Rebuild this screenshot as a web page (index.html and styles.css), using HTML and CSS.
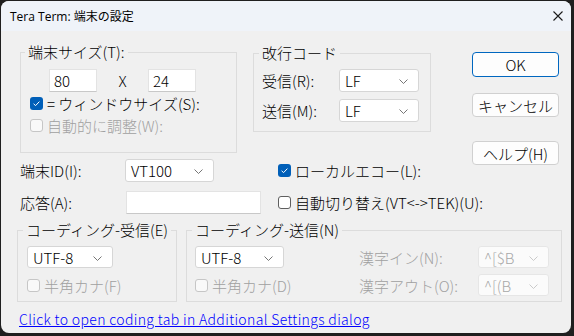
FILE: index.html
```html
<!DOCTYPE html>
<html lang="ja">
<head>
    <meta charset="UTF-8">
    <meta name="viewport" content="width=device-width, initial-scale=1.0">
    <title>Tera Term: 端末の設定</title>

    <link rel="stylesheet" href="styles.css">
</head>
<body>
    <div class="window">
        <div class="titlebar">
            <span class="title">Tera Term: 端末の設定</span>
            <svg class="close" width="10" height="10" viewBox="0 0 10 10">
                <path d="M0.5 0.5 L9.5 9.5 M9.5 0.5 L0.5 9.5" stroke="#1a1a1a" stroke-width="1.1" fill="none"/>
            </svg>
        </div>

        <div class="content">
            <div class="top">
                <div class="main">
                    <div class="groups">
                        <fieldset class="group size-group">
                            <legend>端末サイズ(T):</legend>
                            <div class="size-row">
                                <span class="field size-field">80</span>
                                <span class="times">X</span>
                                <span class="field size-field">24</span>
                            </div>
                            <div class="check-row size-check">
                                <span class="chk on"><svg width="13" height="13" viewBox="0 0 13 13"><path d="M3.6 6.8 L5.6 8.6 L9.4 4.6" stroke="#fff" stroke-width="1" fill="none"/></svg></span>
                                <span>= ウィンドウサイズ(S):</span>
                            </div>
                            <div class="check-row size-check disabled">
                                <span class="chk"></span>
                                <span>自動的に調整(W):</span>
                            </div>
                        </fieldset>

                        <fieldset class="group eol-group">
                            <legend>改行コード</legend>
                            <div class="eol-row">
                                <span class="eol-label">受信(R):</span>
                                <span class="select eol-select">LF<svg class="chev" width="9" height="5" viewBox="0 0 9 5"><path d="M0.5 0.5 L4.5 4.5 L8.5 0.5" stroke="#666" stroke-width="0.9" fill="none"/></svg></span>
                            </div>
                            <div class="eol-row">
                                <span class="eol-label">送信(M):</span>
                                <span class="select eol-select">LF<svg class="chev" width="9" height="5" viewBox="0 0 9 5"><path d="M0.5 0.5 L4.5 4.5 L8.5 0.5" stroke="#666" stroke-width="0.9" fill="none"/></svg></span>
                            </div>
                        </fieldset>
                    </div>

                    <div class="id-grid">
                        <span>端末ID(I):</span>
                        <span class="select id-select">VT100<svg class="chev" width="9" height="5" viewBox="0 0 9 5"><path d="M0.5 0.5 L4.5 4.5 L8.5 0.5" stroke="#666" stroke-width="0.9" fill="none"/></svg></span>
                        <div class="check-row">
                            <span class="chk on"><svg width="13" height="13" viewBox="0 0 13 13"><path d="M3.6 6.8 L5.6 8.6 L9.4 4.6" stroke="#fff" stroke-width="1" fill="none"/></svg></span>
                            <span>ローカルエコー(L):</span>
                        </div>

                        <span>応答(A):</span>
                        <span class="field answer-field"></span>
                        <div class="check-row">
                            <span class="chk"></span>
                            <span>自動切り替え(VT&lt;-&gt;TEK)(U):</span>
                        </div>
                    </div>
                </div>

                <div class="buttons">
                    <button class="btn default">OK</button>
                    <button class="btn cancel">キャンセル</button>
                    <button class="btn help">ヘルプ(H)</button>
                </div>
            </div>

            <div class="coding">
                <fieldset class="group recv-group">
                    <legend>コーディング-受信(E)</legend>
                    <div class="code-grid">
                        <span class="select code-select">UTF-8<svg class="chev" width="9" height="5" viewBox="0 0 9 5"><path d="M0.5 0.5 L4.5 4.5 L8.5 0.5" stroke="#666" stroke-width="0.9" fill="none"/></svg></span>
                        <div class="check-row disabled">
                            <span class="chk"></span>
                            <span>半角カナ(F)</span>
                        </div>
                    </div>
                </fieldset>

                <fieldset class="group send-group">
                    <legend>コーディング-送信(N)</legend>
                    <div class="code-grid send-grid">
                        <span class="select code-select">UTF-8<svg class="chev" width="9" height="5" viewBox="0 0 9 5"><path d="M0.5 0.5 L4.5 4.5 L8.5 0.5" stroke="#666" stroke-width="0.9" fill="none"/></svg></span>
                        <span class="dim">漢字イン(N):</span>
                        <span class="select kanji-select off">^[$B<svg class="chev" width="9" height="5" viewBox="0 0 9 5"><path d="M0.5 0.5 L4.5 4.5 L8.5 0.5" stroke="#c4c4c4" stroke-width="0.9" fill="none"/></svg></span>

                        <div class="check-row disabled">
                            <span class="chk"></span>
                            <span>半角カナ(D)</span>
                        </div>
                        <span class="dim">漢字アウト(O):</span>
                        <span class="select kanji-select off">^[(B<svg class="chev" width="9" height="5" viewBox="0 0 9 5"><path d="M0.5 0.5 L4.5 4.5 L8.5 0.5" stroke="#c4c4c4" stroke-width="0.9" fill="none"/></svg></span>
                    </div>
                </fieldset>
            </div>

            <a class="link" href="#">Click to open coding tab in Additional Settings dialog</a>
        </div>
    </div>
</body>
</html>
```

FILE: styles.css
```css
*{
    box-sizing: border-box;
}

body{
    margin: 0;
    background: #1f1f1f;
    font-family: "Noto Sans CJK JP", sans-serif;
    font-size: 15px;
    font-weight: 300;
    color: #000;
}

.window{
    width: 570px;
    height: 332px;
    margin: 1px 0 0 1px;
    background: #f0f0f0;
    border-radius: 8px;
    overflow: hidden;
}

.titlebar{
    height: 30px;
    background: #eff3f9;
    display: flex;
    align-items: center;
    justify-content: space-between;
    padding: 0 8px 0 9px;
}

.title{
    font-family: "Open Sans", "Noto Sans CJK JP", sans-serif;
    font-size: 12px;
    font-weight: 400;
}

.content{
    padding-left: 16px;
}

.top{
    display: flex;
}

.main{
    width: 455px;
}

.groups{
    display: flex;
    align-items: flex-start;
}

.group{
    margin: 0;
    padding: 0;
    border: 1px solid #dcdcdc;
    min-width: 0;
}

.group legend{
    padding: 0 3px;
    line-height: 18px;
}

.size-group{
    margin: 12px 0 0 3px;
    width: 217px;
    height: 110px;
}

.size-group legend{
    margin-left: 4px;
}

.size-row{
    display: flex;
    align-items: center;
    margin: 8px 0 0 28px;
}

.field{
    display: inline-flex;
    align-items: center;
    height: 23px;
    padding-left: 4px;
    background: #fff;
    border: 1px solid #e3e3e3;
    border-bottom-color: #c8c8c8;
    line-height: 1;
}

.size-field{
    width: 48px;
}

.times{
    width: 51px;
    text-align: center;
}

.check-row{
    display: flex;
    align-items: center;
    gap: 4px;
    height: 22px;
    white-space: nowrap;
}

.size-check{
    margin-left: 9px;
}

.size-check:first-of-type{
    margin-top: 5px;
}

.chk{
    width: 13px;
    height: 13px;
    flex: none;
    border: 1px solid #5f5f5f;
    border-radius: 3px;
    background: #fff;
}

.chk.on{
    border: none;
    background: #005fb8;
}

.chk svg{
    display: block;
}

.disabled{
    color: #a0a0a0;
}

.disabled .chk{
    border-color: #c6c6c6;
    background: #f9f9f9;
}

.dim{
    color: #a0a0a0;
}

.eol-group{
    margin: 13px 0 0 16px;
    width: 178px;
    height: 88px;
}

.eol-group legend{
    margin-left: 5px;
}

.eol-row{
    display: flex;
    align-items: center;
    margin: 7px 0 0 8px;
}

.eol-label{
    width: 77px;
}

.select{
    position: relative;
    display: inline-flex;
    align-items: center;
    height: 23px;
    padding-left: 5px;
    background: #fff;
    border: 1px solid #d6d6d6;
    border-radius: 3px;
    line-height: 1;
}

.chev{
    position: absolute;
    right: 10px;
    top: 9px;
}

.select.off{
    background: #fbfbfb;
    border-color: #e6e6e6;
    color: #a8a8a8;
}

.eol-select{
    width: 80px;
}

.id-grid{
    display: grid;
    grid-template-columns: 105px 153px auto;
    grid-auto-rows: 23px;
    row-gap: 9px;
    align-items: center;
    margin: 6px 0 0 3px;
}

.id-select{
    width: 89px;
}

.answer-field{
    width: 135px;
    margin-left: 1px;
}

.buttons{
    display: flex;
    flex-direction: column;
    margin-top: 21px;
}

.btn{
    width: 87px;
    height: 24px;
    padding: 0;
    background: #fdfdfd;
    border: 1px solid #d0d0d0;
    border-radius: 4px;
    font-family: "Noto Sans CJK JP", sans-serif;
    font-size: 15px;
    font-weight: 300;
    line-height: 1;
    color: #000;
}

.btn.default{
    height: 25px;
    border-color: #0067c0;
}

.btn.cancel{
    margin-top: 16px;
}

.btn.help{
    margin-top: 24px;
}

.coding{
    display: flex;
    margin-top: 7px;
}

.recv-group{
    width: 160px;
    height: 81px;
}

.recv-group legend{
    margin-left: 5px;
}

.send-group{
    margin-left: 9px;
    width: 376px;
    height: 81px;
}

.send-group legend{
    margin-left: 5px;
}

.code-grid{
    display: grid;
    grid-auto-rows: 22px;
    row-gap: 6px;
    align-items: center;
    margin: 7px 0 0 9px;
}

.send-grid{
    grid-template-columns: 164px 119px 71px;
    margin-left: 8px;
}

.code-select{
    width: 86px;
    height: 22px;
}

.send-grid .code-select{
    width: 89px;
}

.kanji-select{
    width: 71px;
    height: 22px;
}

.link{
    display: block;
    margin: 8px 0 0 2px;
    font-size: 14px;
    line-height: 18px;
    letter-spacing: 0.35px;
    color: #0000ff;
}
```
